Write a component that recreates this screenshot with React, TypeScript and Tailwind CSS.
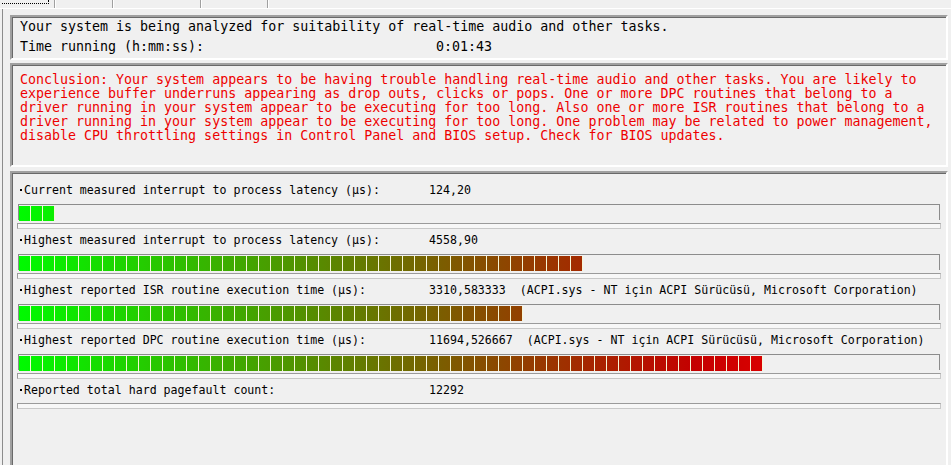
import React from 'react';

interface MeterRow {
  label: string;
  value: string;
  blocks: number | null;
}

const rows: MeterRow[] = [
  { label: 'Current measured interrupt to process latency (µs):', value: '124,20', blocks: 3 },
  { label: 'Highest measured interrupt to process latency (µs):', value: '4558,90', blocks: 47 },
  {
    label: 'Highest reported ISR routine execution time (µs):',
    value: '3310,583333  (ACPI.sys - NT için ACPI Sürücüsü, Microsoft Corporation)',
    blocks: 42,
  },
  {
    label: 'Highest reported DPC routine execution time (µs):',
    value: '11694,526667  (ACPI.sys - NT için ACPI Sürücüsü, Microsoft Corporation)',
    blocks: 62,
  },
  { label: 'Reported total hard pagefault count:', value: '12292', blocks: null },
];

const conclusion = [
  'Conclusion: Your system appears to be having trouble handling real-time audio and other tasks. You are likely to',
  'experience buffer underruns appearing as drop outs, clicks or pops. One or more DPC routines that belong to a',
  'driver running in your system appear to be executing for too long. Also one or more ISR routines that belong to a',
  'driver running in your system appear to be executing for too long. One problem may be related to power management,',
  'disable CPU throttling settings in Control Panel and BIOS setup. Check for BIOS updates.',
];

// full bar holds about 76 blocks, colour runs green -> olive -> red
const TOTAL_BLOCKS = 76;

function meterColor(t: number) {
  const r = Math.round(Math.min(235, 265 * t));
  const g = Math.round(Math.max(0, 250 * (1 - t / 0.74)));
  return `rgb(${r},${g},0)`;
}

function Sunken({ className, children }: { className?: string; children?: React.ReactNode }) {
  return (
    <div
      className={`shrink-0 border-2 border-t-[#a0a0a0] border-l-[#a0a0a0] border-b-white border-r-white shadow-[inset_1px_1px_0_#696969] ${className ?? ''}`}
    >
      {children}
    </div>
  );
}

function Meter({ blocks }: { blocks: number }) {
  return (
    <div className="h-[16px] border-t border-l border-r border-[#8c8c8c] flex items-stretch pt-px">
      {Array.from({ length: blocks }).map((_, i) => (
        <div
          key={i}
          className="w-[12px] h-[15px] border-r border-[#f6f6d6]"
          style={{
            background: `linear-gradient(to right, ${meterColor(i / TOTAL_BLOCKS)}, ${meterColor((i + 1) / TOTAL_BLOCKS)})`,
          }}
        />
      ))}
    </div>
  );
}

export default function App() {
  return (
    <div className="w-[951px] h-[465px] overflow-hidden bg-[#f0f0f0] text-black font-['DejaVu_Sans_Mono',monospace]">
      {/* tab strip */}
      <div className="h-[8px] flex">
        <div className="w-[55px] border-r border-[#a0a0a0]">
          <div className="ml-[2px] w-[47px] h-[4px] border-b border-r border-dotted border-black" />
        </div>
        <div className="w-[58px] border-r border-[#a0a0a0] border-l border-l-white" />
        <div className="w-[88px] border-r border-[#a0a0a0] border-l border-l-white" />
        <div className="w-[67px] border-r border-[#a0a0a0] border-l border-l-white" />
        <div className="flex-1 border-l border-l-white" />
      </div>

      <div className="pl-[2px] h-[457px] border-t border-white">
        <div className="h-full border-l border-[#8c8c8c] pl-[7px] pr-[3px] pt-[6px] flex flex-col gap-[3px]">
          <Sunken className="h-[45px] pl-[8px] text-[13.3px] leading-[20px]">
            <div className="whitespace-pre">Your system is being analyzed for suitability of real-time audio and other tasks.</div>
            <div className="flex whitespace-pre">
              <span className="w-[416px]">Time running (h:mm:ss):</span>
              <span>0:01:43</span>
            </div>
          </Sunken>

          <Sunken className="h-[104px] pl-[8px] pt-[8px] text-[13.3px] leading-[14px] text-[#ee0000]">
            {conclusion.map((line, i) => (
              <div key={i} className="whitespace-pre">
                {line}
              </div>
            ))}
          </Sunken>

          <Sunken className="mt-px h-[320px] pl-[6px] pr-[6px] pt-[9px] text-[11.6px] leading-[16px]">
            <div className="flex flex-col gap-[3px]">
              {rows.map((row, i) => (
                <div key={i} className="flex flex-col">
                  <div className="h-[16px] flex items-center whitespace-pre pl-[2px]">
                    <span className="w-[2px] h-[2px] bg-black mr-[2px]" />
                    <span className="w-[405px]">{row.label}</span>
                    <span>{row.value}</span>
                  </div>
                  {row.blocks !== null ? (
                    <div className="mt-[6px]">
                      <Meter blocks={row.blocks} />
                    </div>
                  ) : null}
                  <div
                    className={`${row.blocks !== null ? 'mt-[3px]' : 'mt-[5px]'} -mx-px h-[6px] border border-[#9a9a9a] border-b-[#c8c8c8] border-r-[#c8c8c8] bg-[#f7f7f7]`}
                  />
                </div>
              ))}
            </div>
          </Sunken>
        </div>
      </div>
    </div>
  );
}
